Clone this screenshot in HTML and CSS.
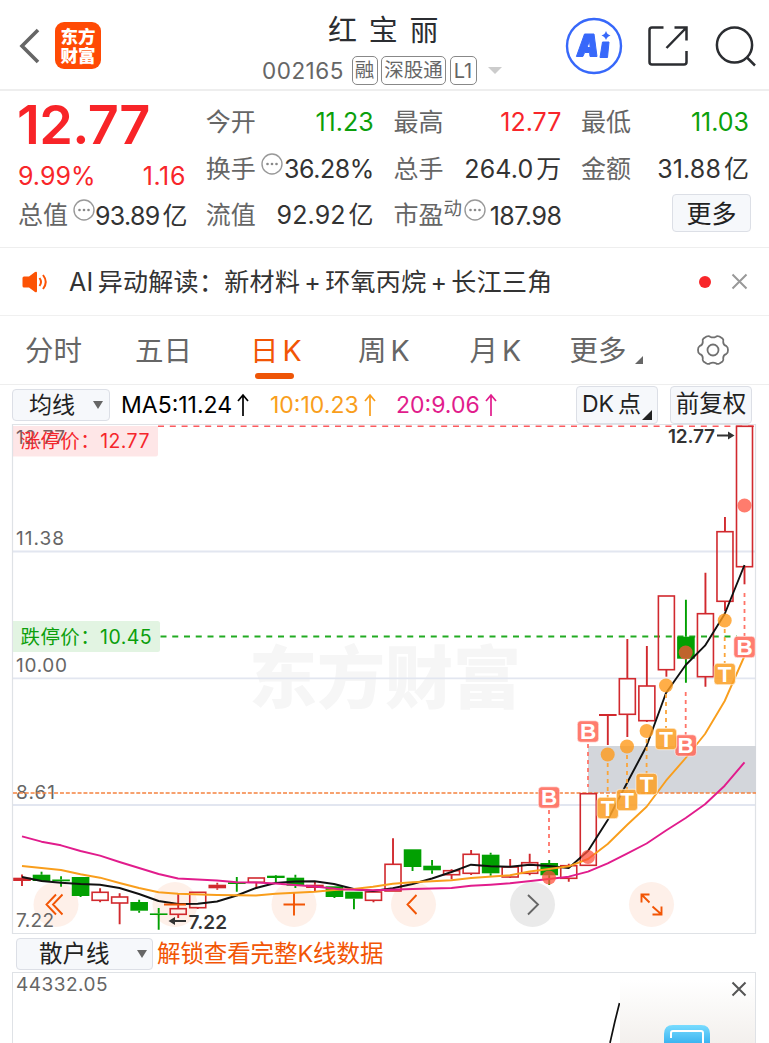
FILE: index.html
```
<!DOCTYPE html>
<html lang="zh-CN">
<head>
<meta charset="utf-8">
<title>红宝丽 002165</title>
<link rel="stylesheet" href="styles.css">
</head>
<body>
<svg width="0" height="0" class="defs">
  <symbol id="info" viewBox="0 0 22 22"><circle cx="11" cy="11" r="10" fill="none" stroke="#999" stroke-width="1.4"/><circle cx="6.5" cy="11" r="1.3" fill="#888"/><circle cx="11" cy="11" r="1.3" fill="#888"/><circle cx="15.5" cy="11" r="1.3" fill="#888"/></symbol>
</svg>
<header class="header">
  <div class="left">
    <svg class="back" width="22" height="36" viewBox="0 0 22 36"><path d="M19 2 3 18 19 34" fill="none" stroke="#666" stroke-width="3.6"/></svg>
    <div class="logo"><span>东方</span><span>财富</span></div>
  </div>
  <div class="title">
    <h1>红宝丽</h1>
    <div class="sub"><span class="code">002165</span><span class="tag">融</span><span class="tag tag-wide">深股通</span><span class="tag tag-l1">L1</span><i class="caret"></i></div>
  </div>
  <div class="right">
    <svg width="58" height="58" viewBox="0 0 58 58"><circle cx="29" cy="29" r="27" fill="none" stroke="#3768fa" stroke-width="2.4"/><path fill="#3768fa" fill-rule="evenodd" stroke="#3768fa" stroke-width="1" stroke-linejoin="round" d="M19.500 17h9.500l3 22.500h-7l-.4-4h-5l-1.700 4h-6.500ZM24.500 24l-2.500 6.500h3.200ZM37.500 25h6.500l-1.500 15.500h-7.500Z"/><path fill="#3768fa" d="M41 14q1 3.500 4.500 4.500Q42 19.500 41 23q-1-3.500-4.500-4.500Q40 17.500 41 14Z"/></svg>
    <svg width="42" height="42" viewBox="0 0 42 42" fill="none" stroke="#2b2d31" stroke-width="2.500"><path d="M16.500 2.500H5q-2.500 0-2.500 2.500v32q0 2.500 2.500 2.500h32q2.500 0 2.500-2.500V26M27.500 2.500h12v13M39 3 19.500 23"/></svg>
    <svg width="42" height="42" viewBox="0 0 42 42" fill="none" stroke="#2b2d31" stroke-width="2.500"><circle cx="19.500" cy="20" r="17.600"/><path d="m32 32.500 8 8"/></svg>
  </div>
</header>

<section class="quote">
  <div class="col first">
    <div class="price">12.77</div>
    <div class="cell red chg"><b>9.99%</b><b class="diff">1.16</b></div>
    <div class="cell"><span>总值<svg class="info"><use href="#info"/></svg></span><b class="tight">93.89<em>亿</em></b></div>
  </div>
  <div class="col">
    <div class="cell"><span>今开</span><b class="green">11.23</b></div>
    <div class="cell"><span>换手<svg class="info"><use href="#info"/></svg></span><b class="tight">36.28%</b></div>
    <div class="cell"><span>流值</span><b>92.92<em>亿</em></b></div>
  </div>
  <div class="col">
    <div class="cell"><span>最高</span><b class="red">12.77</b></div>
    <div class="cell"><span>总手</span><b>264.0<em>万</em></b></div>
    <div class="cell"><span>市盈<sup>动</sup><svg class="info pe"><use href="#info"/></svg></span><b class="tight">187.98</b></div>
  </div>
  <div class="col">
    <div class="cell"><span>最低</span><b class="green">11.03</b></div>
    <div class="cell"><span>金额</span><b>31.88<em>亿</em></b></div>
    <div class="cell end"><button class="btn more">更多</button></div>
  </div>
</section>

<section class="notice">
  <svg width="28" height="24" viewBox="0 0 28 24"><path fill="#fc5305" d="M3 6.500h5L14 2q2-1 2 1v18q0 2-2 1l-6-4.500H3q-1.500 0-1.500-1.500V8Q1.500 6.500 3 6.500Z"/><path d="M18.500 8q3 4 0 8M22 5q5.500 7 0 14" fill="none" stroke="#fc5305" stroke-width="2"/></svg>
  <p>AI<em></em>异动解读：新材料<em></em>+<em></em>环氧丙烷<em></em>+<em></em>长江三角</p>
  <i class="dot"></i>
  <svg width="17" height="17" viewBox="0 0 17 17"><path d="m1.500 1.500 14 14m0-14-14 14" stroke="#999" stroke-width="2"/></svg>
</section>

<nav class="tabs">
  <a>分时</a><a>五日</a><a class="active">日<em></em>K</a><a>周<em></em>K</a><a>月<em></em>K</a><a class="moretab">更多</a>
  <svg class="gear" width="34" height="32" viewBox="-17 -16 34 32" fill="none" stroke="#707070" stroke-width="1.800"><path d="M-6.500-13.500Q-4-14.500-3-13.300Q0-11.800 3-13.300Q4-14.500 6.500-13.500L9.500-11.500Q10.800-10.500 10.200-8Q10.300-4.800 13.500-3.800Q15-3 15 0Q15 3 13.500 3.800Q10.300 4.800 10.200 8Q10.800 10.500 9.500 11.500L6.500 13.500Q4 14.500 3 13.300Q0 11.800-3 13.300Q-4 14.500-6.500 13.500L-9.500 11.500Q-10.800 10.500-10.200 8Q-10.300 4.800-13.500 3.800Q-15 3-15 0Q-15-3-13.500-3.800Q-10.300-4.800-10.200-8Q-10.800-10.500-9.500-11.500Z"/><circle r="5.500"/></svg>
</nav>

<section class="bar">
  <button class="btn sel"><span>均线</span><i></i></button>
  <span class="ma ma5">MA5:11.24<svg width="12" height="24" viewBox="0 0 12 24"><path d="M6 23V2M1 8l5-6 5 6"/></svg></span>
  <span class="ma ma10">10:10.23<svg width="12" height="24" viewBox="0 0 12 24"><path d="M6 23V2M1 8l5-6 5 6"/></svg></span>
  <span class="ma ma20">20:9.06<svg width="12" height="24" viewBox="0 0 12 24"><path d="M6 23V2M1 8l5-6 5 6"/></svg></span>
  <button class="btn dk">DK<em></em>点</button>
  <button class="btn fq">前复权</button>
</section>

<svg class="chart" width="769" height="511" viewBox="0 424 769 511">
  <g fill="#f6f6f6"><text x="249" y="703" font-size="68" font-weight="900" textLength="272">东方财富</text></g>
  <path d="M12 551.500H756M12 678.300H756M12 805H756" stroke="#e2e6f0" stroke-width="1.800"/>
  <path d="M12.500 424V933.500H755.500V424.500H12" fill="none" stroke="#dfe2e6" stroke-width="1.200"/>
  <rect x="588" y="746" width="168" height="47" fill="#d3d6db"/>
  <g fill="#fef0e9"><circle cx="56" cy="904.500" r="22.500"/><circle cx="175" cy="904.500" r="22.500"/><circle cx="294" cy="904.500" r="22.500"/><circle cx="413.500" cy="904.500" r="22.500"/><circle cx="651.500" cy="904.500" r="22.500"/></g>
  <circle cx="532.500" cy="904.500" r="22.500" fill="#eaeaea"/>
  <g font-size="19" fill="#666">
    <text x="16" y="444" textLength="49">12.77</text>
    <text x="16" y="545" textLength="48">11.38</text>
    <text x="16" y="672" textLength="51">10.00</text>
    <text x="16" y="799" textLength="39">8.61</text>
    <text x="16" y="926.500" textLength="38">7.22</text>
  </g>
  <path d="M13 426H158V454q0 2.500-2.500 2.500H13Z" fill="#fa3c46" fill-opacity=".13"/>
  <path d="M13 621H157.500q2.500 0 2.500 2.500V649.500q0 2.500-2.500 2.500H13Z" fill="#e2f4e2"/>
  <text x="20.500" y="448" font-size="19.500" fill="#f5262c" textLength="129">涨停价：12.77</text>
  <text x="20.500" y="644" font-size="19.500" fill="#0c9f0c" textLength="131">跌停价：10.45</text>
  <path d="M158 426.200H756" stroke="#fb5b5f" stroke-width="1.500" stroke-dasharray="6 5.800"/>
  <path d="M160.500 636.500H737" stroke="#22ab22" stroke-width="2.200" stroke-dasharray="6 5.750"/>
  <path d="M13 793H756" stroke="#f5823f" stroke-width="1.700" stroke-dasharray="4 1.870"/>
  <g id="candles"></g>
  <g fill="none" stroke-width="1.900" stroke-linejoin="round">
    <path stroke="#111" d="M22 877 41.500 881 61 882.700 80.500 884 100 884.700 119.500 888 139 894 158.600 901 178 904 197.700 903.700 217 901.500 236.700 895.500 256 888 275.500 883 295 881.500 314.600 881.300 334 884 353.700 889 373 891 392.800 888.300 412.500 884 432 878.500 451.500 872 471 864.700 490.500 866.300 510 866.700 529.700 864.800 549 866 568.700 868 588 851 607.700 820 627 783 646.600 746 666 693 685.700 665 705 645.700 724.700 614 744.500 565"/>
    <path stroke="#f99e1c" d="M22 866 61 870 80.500 874.300 100 877.700 119.500 883 139 888 158.600 892.300 178 893.700 217 895 256 895.500 275.500 893.800 314.600 891.700 334 890 353.700 889 373 886.700 392.800 883.700 412.500 882.300 451.500 880.300 471 878 510 875.300 529.700 871.500 549 869 568.700 866.300 588 859 607.700 844 627 825 646.600 806.700 666 780.700 685.700 758 705 734 724.700 701 744.500 656"/>
    <path stroke="#e11c8c" d="M22 836.300 41.500 841.700 61 845.300 80.500 851 100 855.700 119.500 862 158.600 874 178 878.500 217 880.500 236.700 882.300 256 882.500 275.500 883.500 314.600 886.500 340 889.300 373 890.300 412.500 889 451.500 888 471 885.700 490.500 884.700 510 883.300 549 879 568.700 876.700 588 871.700 607.700 863.300 627 853.700 646.600 843.500 666 830.500 685.700 818 705 804.300 724.700 785.700 744.500 762.300"/>
  </g>
  <g fill="none" stroke-width="1.800" stroke-dasharray="4 4">
    <path stroke="#ff7468" d="M549 810v43M588 744v43M685.700 692v43M744.500 593v43"/>
    <path stroke="#fba53a" d="M607.700 763v35M627 755v35M646.600 739v35M666 694v34M724.700 629v34"/>
  </g>
  <g fill="#ff503c" fill-opacity=".75"><circle cx="549" cy="877.500" r="7"/><circle cx="588" cy="857" r="7"/><circle cx="685.700" cy="652.500" r="7"/><circle cx="744.500" cy="505.500" r="7"/></g>
  <g fill="#ff9a1a" fill-opacity=".8"><circle cx="607.700" cy="754.500" r="7"/><circle cx="627" cy="746.500" r="7"/><circle cx="646.600" cy="731" r="7"/><circle cx="666" cy="685.500" r="7"/><circle cx="724.700" cy="620.500" r="7"/></g>
  <g id="marks" font-family="Liberation Sans" font-size="22.500" font-weight="700" text-anchor="middle"></g>
  <g fill="none" stroke="#f25505" stroke-width="1.900"><path d="m56 894.500-9.500 10 9.500 10M62.500 894.500l-9.500 10 9.500 10M164 904.500h22M283.500 904.500h21.500M294 893.500v22M416.500 895l-9 9.500 9 9.500M641.500 902.500v-8h8M641.500 894.500l8 8M661.500 906.500v8h-9M661.500 914.500l-9-8"/></g>
  <path d="m528 895 10 9.500-10 10" fill="none" stroke="#666" stroke-width="1.900"/>
  <g font-size="19" font-weight="600" fill="#333"><text x="668" y="442.500" textLength="47">12.77</text><text x="188.500" y="929" textLength="38.500">7.22</text></g>
  <path d="M717 435.500h14M186 921h-14" stroke="#333" stroke-width="1.800"/><path d="M728 431.500l6.500 4-6.500 4ZM175 917l-6.500 4 6.500 4Z" fill="#333"/>
</svg>

<section class="bar2">
  <button class="btn sel2"><span>散户线</span><i></i></button>
  <span class="unlock">解锁查看完整K线数据</span>
</section>
<section class="panel">
  <span class="vol">44332.05</span>
  <svg class="trend" width="12" height="42" viewBox="0 0 12 42"><path d="M2 42 7 20 11.500 2" fill="none" stroke="#111" stroke-width="1.700"/></svg>
  <div class="promo">
    <svg class="close" width="16" height="16" viewBox="0 0 16 16"><path d="m1.500 1.500 13 13m0-13-13 13" stroke="#555" stroke-width="2"/></svg>
    <svg class="device" width="46" height="18" viewBox="0 0 46 18"><defs><linearGradient id="g" x2="0" y2="1"><stop stop-color="#79dcff"/><stop offset="1" stop-color="#3cb4f0"/></linearGradient></defs><path d="M0 18V9Q0 0 9 0H37Q46 0 46 9V18Z" fill="url(#g)"/><path d="M7 13V8q0-2 2-2h28q2 0 2 2v10" fill="none" stroke="#fff" stroke-width="2"/></svg>
  </div>
</section>
<script src="chart.js"></script>
</body>
</html>
```
FILE: styles.css
```
* { box-sizing: border-box; }
body { margin: 0; width: 769px; height: 1043px; overflow: hidden; background: #fff; color: #333; font-family: Inter, "Noto Sans CJK SC", sans-serif; }
h1, p { margin: 0; font-weight: 400; }
em { font-style: normal; }
.defs { position: absolute; }
.red { color: #f8262a; }
.green { color: #0c9f0c; }
.btn { font: inherit; color: #222; background: #f6f8fb; border: 1.500px solid #dcdfe6; border-radius: 4px; padding: 0; white-space: nowrap; }

.header { height: 91px; border-bottom: 2px solid #eee; display: grid; grid-template-columns: 250px 1fr 204px; }
.left { display: flex; align-items: center; padding: 2px 0 0 19px; gap: 14px; }
.logo { width: 46px; height: 47px; border-radius: 9px; background: #ff4a04; color: #fff; display: flex; flex-direction: column; align-items: center; justify-content: center; font-size: 17.500px; line-height: 19px; font-weight: 800; }
.title { padding-left: 12px; }
.title h1 { font-size: 29px; line-height: 34px; letter-spacing: 11.700px; margin: 14px 0 0 66px; color: #2b2d31; }
.sub { display: flex; align-items: center; margin-top: 7px; height: 30px; gap: 3.500px; }
.code { font-size: 22.500px; color: #666; letter-spacing: .5px; width: 85px; margin-right: 1px; }
.tag { width: 26px; height: 29px; border: 1.500px solid #888; border-radius: 5px; font-size: 19.500px; line-height: 27px; text-align: center; color: #666; white-space: nowrap; display: flex; justify-content: center; }
.tag-wide { width: 65px; }
.tag-l1 { width: 27px; font-size: 20px; line-height: 28px; }
.caret { border: 7px solid transparent; border-top-color: #ccc; border-bottom: 0; margin-left: 8px; }
.right { display: flex; align-items: center; padding-top: 2px; }
.right svg:nth-child(2) { margin-left: 24px; }
.right svg:nth-child(3) { margin-left: 26px; }

.quote { height: 157px; border-bottom: 1px solid #eee; display: grid; grid-template-columns: 168px 168px 168px 168px; column-gap: 19.700px; padding: 8px 0 0 18px; }
.cell { height: 46.700px; display: flex; justify-content: space-between; align-items: center; font-size: 25px; line-height: 30px; white-space: nowrap; }
.cell span { color: #666; display: flex; align-items: center; padding-bottom: 1px; }
.cell b { font-weight: 400; letter-spacing: 0; padding-bottom: 1px; }
.cell b em { margin-left: 3px; line-height: 20px; }
.cell b:has(em) { padding-bottom: 1px; letter-spacing: .1px; }
.cell b.tight { letter-spacing: -.5px; padding-bottom: 0; }
.cell b.tight:has(em) { padding-bottom: 0; letter-spacing: -.7px; }
.cell b.diff { letter-spacing: .6px; }
.cell .info { width: 22px; height: 22px; margin: -10px 0 0 5px; }
.cell .info.pe { margin-left: 2px; }
.cell sup { font-size: 18.500px; line-height: 20px; margin-top: -15px; }
.price { height: 54px; line-height: 51px; font-size: 54px; font-weight: 600; color: #f82428; letter-spacing: -.600px; margin-left: -1px; }
.chg { height: 39.400px; padding-top: 7px; }
.end { justify-content: flex-end; }
.more { width: 79px; height: 38px; margin: -6px -2px 0 0; line-height: 30px; padding: 2px 0 0; }

.notice { height: 68px; border-bottom: 1px solid #f0f0f0; display: flex; align-items: center; padding-left: 21px; font-size: 25px; }
.notice p { margin-left: 20px; width: 609px; white-space: nowrap; letter-spacing: .33px; padding-bottom: 4px; }
.notice em, .tabs em, .dk em { display: inline-block; width: 4px; }
.dot { width: 12px; height: 12px; border-radius: 50%; background: #f8262a; margin: 0 20px 0 21px; }

.tabs { height: 69px; border-bottom: 1px solid #eee; display: flex; align-items: center; padding-left: 25px; color: #666; font-size: 28.500px; }
.tabs a { position: relative; white-space: nowrap; width: 111.500px; top: -2px; }
.tabs a:nth-child(1) { width: 110px; }
.tabs a:nth-child(2) { width: 115px; }
.tabs a:nth-child(3) { width: 108px; }
.tabs a:nth-child(5) { width: 100px; }
.tabs .moretab { width: 126px; }
.tabs .moretab::after { content: ""; position: absolute; left: 65px; bottom: 5px; border: 4px solid transparent; border-right-color: #666; border-bottom-color: #666; }
.tabs .active { color: #f25505; }
.tabs .active::after { content: ""; position: absolute; left: 5px; bottom: -10px; width: 39px; height: 6px; border-radius: 3px; background: #ee5507; }

.bar { height: 39px; display: flex; align-items: center; padding-left: 12px; font-size: 23px; }
.sel span, .sel2 span { padding-bottom: 3px; }
.sel { width: 98px; height: 32px; padding-left: 16px; text-align: left; display: flex; align-items: center; justify-content: space-between; padding-right: 6px; }
.btn i { border: 5px solid transparent; border-top: 8px solid #666; border-bottom: 0; }
.ma { display: flex; align-items: center; gap: 5px; white-space: nowrap; }
.ma svg { fill: none; stroke: currentColor; stroke-width: 1.700; }
.ma5 { color: #000; margin-left: 11px; width: 149px; }
.ma10 { color: #f99e1c; width: 126px; }
.ma20 { color: #e11c8c; width: 180px; }
.dk { width: 82px; height: 38px; position: relative; text-align: left; padding: 0 0 1px 5px; line-height: 30px; }
.dk::after { content: ""; position: absolute; right: 5px; bottom: 3px; border: 5.500px solid transparent; border-right-color: #222; border-bottom-color: #222; }
.fq { width: 82px; height: 38px; margin-left: 12px; padding-bottom: 1px; line-height: 30px; font-size: 23.500px; }

.chart { display: block; font-family: Inter, "Noto Sans CJK SC", sans-serif; }
.bar2 { height: 37px; display: flex; align-items: center; padding-left: 16px; font-size: 23.500px; color: #f25505; }
.unlock { padding-bottom: 4px; letter-spacing: -.100px; }
.sel2 { width: 137px; height: 32px; display: flex; align-items: center; justify-content: space-between; padding: 0 5px 0 22px; margin-right: 4px; }
.panel { height: 71px; margin: 0 13px 0 12px; border: 1px solid #dfe2e6; border-bottom: 0; display: flex; align-items: flex-start; }
.vol { font-size: 19px; line-height: 24px; color: #666; margin-left: 3px; width: 593px; letter-spacing: .5px; }
.trend { margin-top: 28px; }
.promo { width: 135px; height: 70px; background: linear-gradient(#fff 10%, #f3f0ed); position: relative; }
.close { position: absolute; left: 111px; top: 8px; }
.device { position: absolute; left: 44px; top: 52px; }
```
FILE: chart.js
```
// kind: h = hollow rising, r = filled rising, g = falling; then high, body top, body bottom, low
const days = [
  ['r',874.5,877.7,881,886],['g',871.7,874.7,881,881],['g',876.3,879.5,881.3,886.7],['g',877,877,896,897],
  ['h',888.3,892.3,900.3,902.3],['h',893.3,897,903,924.3],['g',899.7,902,910.7,912.7],['g',908,913.4,915,929.7],
  ['h',893,908.7,914.3,918],['h',892.3,892.3,907.7,909],['r',882.7,884.7,888.3,889.7],['g',877,882.3,884,891.7],
  ['h',878,878,882.3,889],['g',875,875.7,878,882.7],['g',874.7,877.7,885.7,888],['r',882,884.7,888,891],
  ['g',886.3,886.3,897,898],['g',891.7,891.7,898.7,909.3],['h',892,892,900.3,902.3],['h',838.3,864.3,891,891],
  ['g',849.3,849.3,867,871],['g',860,865.7,870.3,873.7],['h',869.3,870.7,874.7,879.3],['h',850,854.3,873.3,875],
  ['g',852.7,854.7,873.3,875.7],['h',859,867,877,878],['h',853.7,862.7,873.3,875.3],['g',860,863,875.3,885],
  ['h',863.7,865.7,878.3,881.7],['h',793.7,793.7,865.3,865.3],['r',714,714,716,745],['h',639,678.7,714.3,737],
  ['h',646,686,720.7,722],['h',596,596,669.7,676.7],['g',599.7,636.7,658.7,682.7],['h',572.7,613.7,676.7,686.7],
  ['h',517,531.7,601.3,611],['h',426.3,426.3,566.7,584.3]
];
document.getElementById('candles').innerHTML = days.map(([k, hi, top, bot, lo], i) => {
  const x = 22 + i * 19.527;
  const c = k === 'g' ? '#02a002' : '#d1292e';
  const wick = `<path d="M${x} ${hi}V${top}M${x} ${bot}V${lo}" stroke="${c}" stroke-width="1.9"/>`;
  const body = k === 'h'
    ? `<rect x="${x - 8}" y="${top}" width="16" height="${bot - top}" fill="none" stroke="${c}" stroke-width="1.6"/>`
    : `<rect x="${x - 8.8}" y="${top}" width="17.6" height="${bot - top}" fill="${c}"/>`;
  return wick + body;
}).join('');

const marks = [['B',549,797.5],['B',588,731.5],['B',685.7,745.5],['B',744.5,647],
  ['T',607.7,808],['T',627,800],['T',646.6,784],['T',666,739],['T',724.7,674]];
document.getElementById('marks').innerHTML = marks.map(([t, x, y]) =>
  `<rect x="${x - 10.7}" y="${y - 10.7}" width="21.4" height="21.4" rx="3.5" fill="${t === 'B' ? '#ff6a5b' : '#fba028'}" fill-opacity=".88" stroke="#fff" stroke-opacity=".6"/><text x="${x}" y="${y + 7.8}" fill="#fff">${t}</text>`
).join('');
```
